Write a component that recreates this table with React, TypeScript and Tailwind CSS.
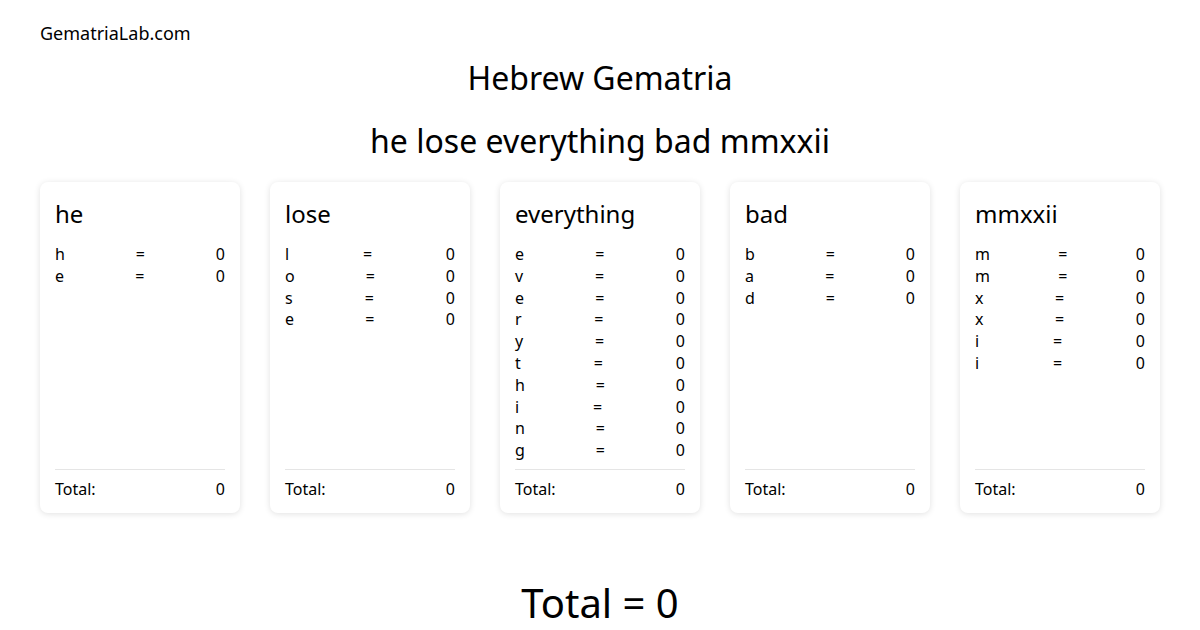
const words = ["he", "lose", "everything", "bad", "mmxxii"];

function WordCard({ word }: { word: string }) {
  return (
    <div className="flex w-[200px] flex-col rounded-lg bg-white px-[15px] pt-[15px] pb-[12px] shadow-[0_1px_6px_rgba(0,0,0,0.12)]">
      <div className="text-[24px] leading-[33px]">{word}</div>
      <div className="mt-[14px] mb-[7px] flex flex-col">
        {word.split("").map((ch, i) => (
          <div key={i} className="flex justify-between text-base leading-[21.8px]">
            <span>{ch}</span>
            <span>=</span>
            <span>0</span>
          </div>
        ))}
      </div>
      <div className="mt-auto flex justify-between border-t border-[#e5e5e5] pt-[9px] text-base leading-[21.8px]">
        <span>Total:</span>
        <span>0</span>
      </div>
    </div>
  );
}

export default function App() {
  return (
    <div
      className="h-[630px] w-[1200px] overflow-hidden bg-white px-10 text-black"
      style={{ fontFamily: '"Noto Sans", "Open Sans", sans-serif' }}
    >
      {/* Header */}
      <div className="pt-[21px] text-[18px] leading-[24px]">GematriaLab.com</div>

      <h1 className="mt-[11px] text-center text-[32px] leading-[44px]">Hebrew Gematria</h1>
      <h2 className="mt-[19px] text-center text-[32px] leading-[44px]">he lose everything bad mmxxii</h2>

      {/* Cards */}
      <div className="mt-[19px] flex justify-between">
        {words.map((w) => (
          <WordCard key={w} word={w} />
        ))}
      </div>

      <div className="mt-[65px] text-center text-[40px] leading-[50px]">Total = 0</div>
    </div>
  );
}
